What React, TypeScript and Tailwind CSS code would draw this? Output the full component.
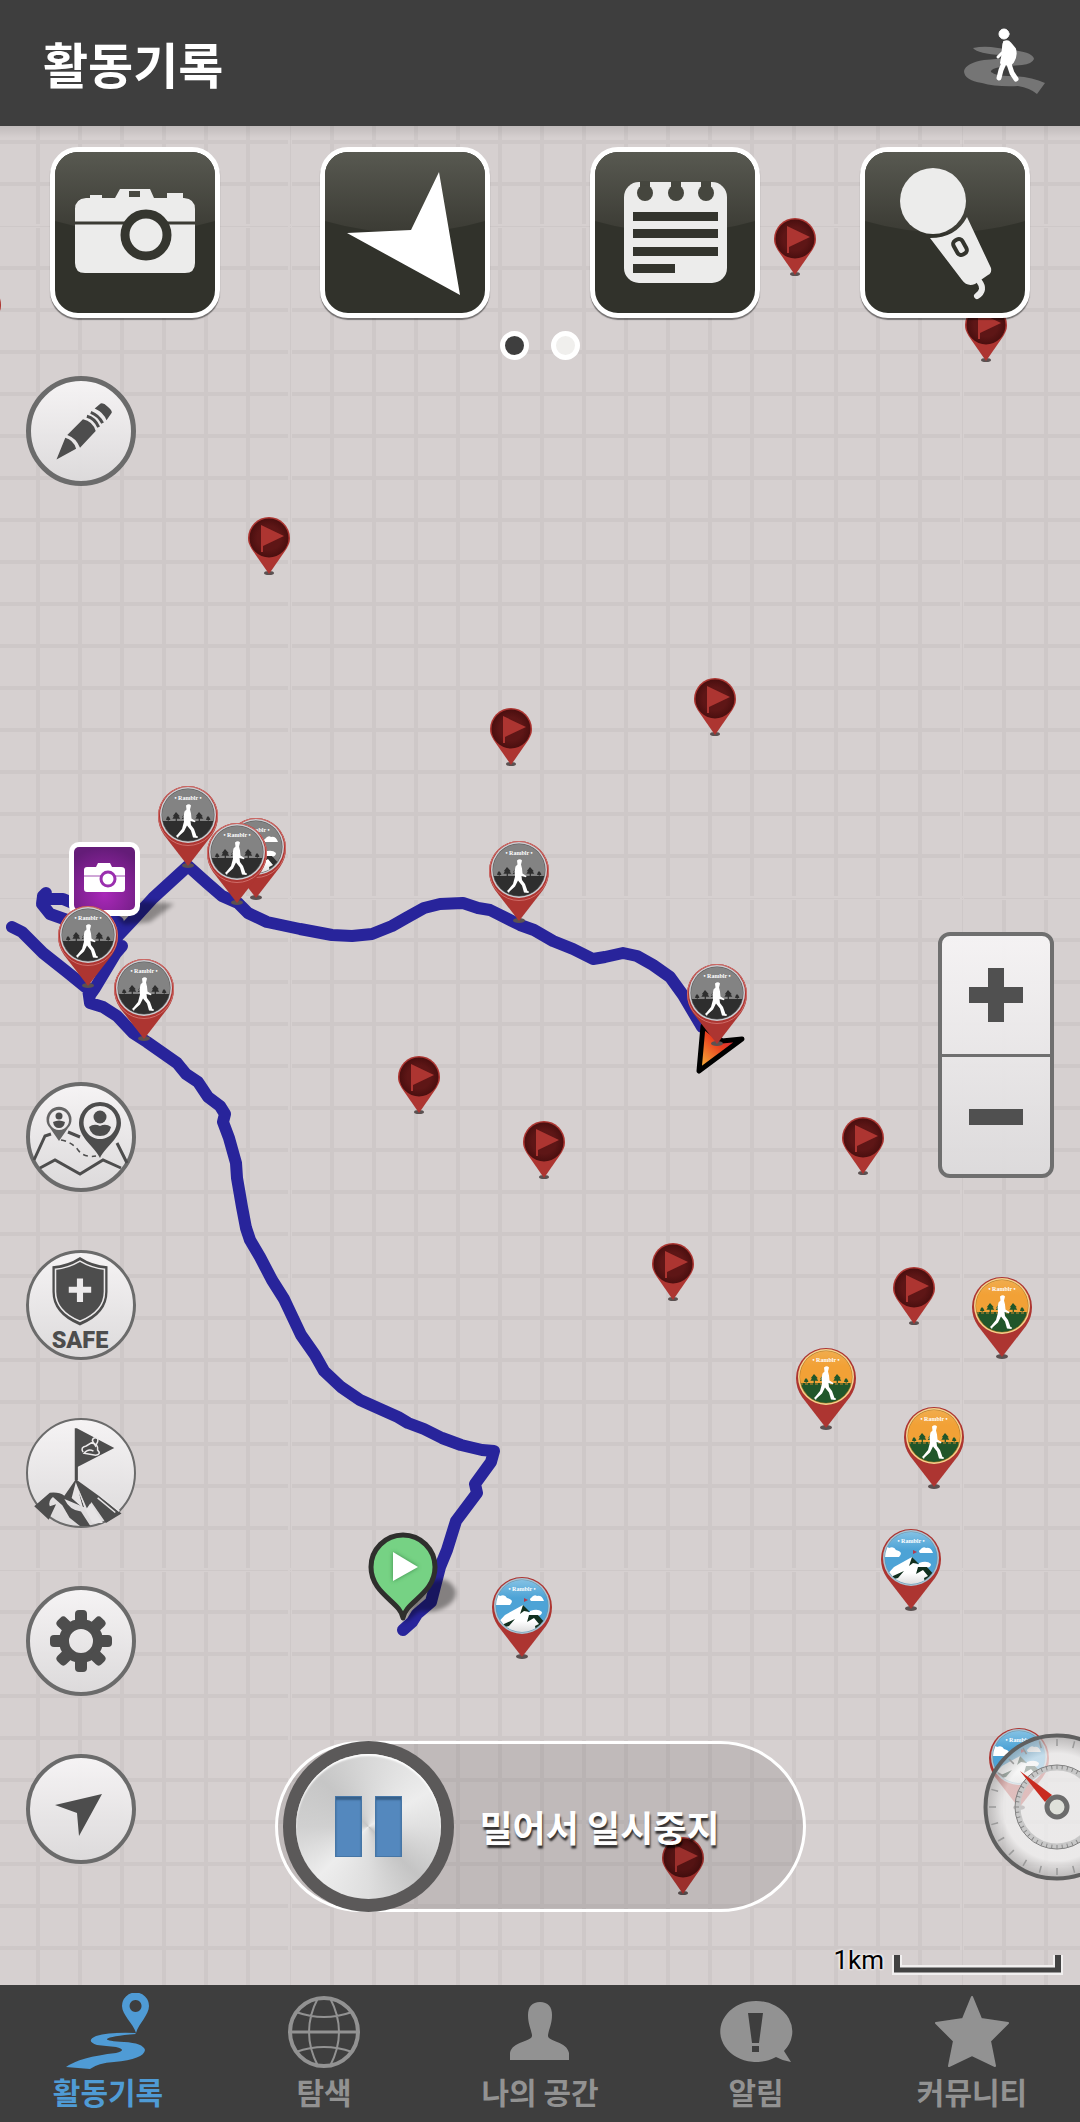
import React from 'react';
import clsx from 'clsx';

type BadgeKind = 'walk' | 'walkGray' | 'peak' | 'peakGray';

// Pin positions are the middle of the head and the top edge, in map pixels
const flagPins = [
  { x: -20, y: 158 },
  { x: 795, y: 92 },
  { x: 986, y: 178 },
  { x: 269, y: 391 },
  { x: 511, y: 582 },
  { x: 715, y: 552 },
  { x: 419, y: 930 },
  { x: 544, y: 995 },
  { x: 863, y: 991 },
  { x: 673, y: 1117 },
  { x: 914, y: 1141 },
  { x: 683, y: 1711 },
];

const badgePins: { x: number; y: number; kind: BadgeKind }[] = [
  { x: 188, y: 660, kind: 'walkGray' },
  { x: 256, y: 692, kind: 'peakGray' },
  { x: 237, y: 697, kind: 'walkGray' },
  { x: 88, y: 780, kind: 'walkGray' },
  { x: 144, y: 833, kind: 'walkGray' },
  { x: 519, y: 715, kind: 'walkGray' },
  { x: 717, y: 838, kind: 'walkGray' },
  { x: 1002, y: 1151, kind: 'walk' },
  { x: 826, y: 1222, kind: 'walk' },
  { x: 934, y: 1281, kind: 'walk' },
  { x: 911, y: 1403, kind: 'peak' },
  { x: 522, y: 1451, kind: 'peak' },
  { x: 1019, y: 1602, kind: 'peak' },
];

const SharedDefs = () => (
  <svg className="absolute size-0" aria-hidden="true">
    <defs>
      <radialGradient id="flagHead">
        <stop offset="0.6" stopColor="#5e1616" />
        <stop offset="1" stopColor="#4a0f0f" />
      </radialGradient>
      <linearGradient id="skyOrange" x1="0" y1="0" x2="0" y2="1">
        <stop offset="0" stopColor="#f0ae52" />
        <stop offset="0.3" stopColor="#f2a136" />
      </linearGradient>
      <linearGradient id="skyBlue" x1="0" y1="0" x2="0" y2="1">
        <stop offset="0" stopColor="#8cc6e6" />
        <stop offset="0.35" stopColor="#4da3d6" />
      </linearGradient>
      <linearGradient id="gloss" x1="0" y1="0" x2="0" y2="1">
        <stop offset="0" stopColor="#585951" />
        <stop offset="1" stopColor="#3b3b34" />
      </linearGradient>
      <linearGradient id="fire" x1="0.9" y1="0.1" x2="0.1" y2="1">
        <stop offset="0" stopColor="#c01a50" />
        <stop offset="0.45" stopColor="#e8401f" />
        <stop offset="1" stopColor="#f9b63a" />
      </linearGradient>
      <linearGradient id="snow" x1="0" y1="0" x2="0" y2="1">
        <stop offset="0.5" stopColor="#ffffff" />
        <stop offset="1" stopColor="#cfcfcf" />
      </linearGradient>
      <clipPath id="badgeClip">
        <circle cx="30" cy="29" r="26" />
      </clipPath>
    </defs>
  </svg>
);

const MapGrid = () => (
  <svg className="absolute inset-0 size-full">
    <defs>
      <pattern id="cell" x="290" y="100" width="42" height="42" patternUnits="userSpaceOnUse">
        <path d="M0 0h42M0 42h42M0 0v42M42 0v42" stroke="#cec8c8" strokeWidth="4" />
      </pattern>
      {/* every 16 cells a tile border covers half of the line */}
      <pattern id="tile" x="290" y="100" width="672" height="672" patternUnits="userSpaceOnUse">
        <path d="M0 1.5h672M1.5 0v672" stroke="#d6d0d0" strokeWidth="1" />
        <path d="M0 671h672M671 0v672" stroke="#d6d0d0" strokeWidth="2" />
      </pattern>
    </defs>
    <rect width="100%" height="100%" fill="#d6d0d0" />
    <rect width="100%" height="100%" fill="url(#cell)" />
    <rect width="100%" height="100%" fill="url(#tile)" />
  </svg>
);

const Route = () => (
  <svg className="absolute top-0 left-0 h-[1859px] w-[1080px]" viewBox="0 126 1080 1859">
    <g fill="none" stroke="#28249b" strokeWidth="12" strokeLinecap="round" strokeLinejoin="round">
      <path d="M12 927L22 932 43 953 67 972 88 989 90 1003 103 1007 117 1016 133 1033 147 1042 177 1063 186 1074 198 1082 208 1097 220 1106 225 1114 223 1122 229 1138 236 1163 237 1178 242 1207 246 1228 250 1240 260 1257 272 1280 284 1299 301 1335 315 1355 324 1371 341 1387 360 1400 398 1417 408 1423 424 1429 442 1438 461 1445 482 1450 494 1451 491 1462 475 1484 477 1493 456 1521 447 1550 440 1567 431 1602 417 1614 412 1622 403 1630" />
      <path d="M90 995L95 988 116 953 122 946 M110 950L118 936 133 920 153 898 188 866 207 883 222 896 238 903 248 913 267 922 300 929 332 935 352 936 372 934 392 926 406 918 424 908 440 904 463 903 478 908 490 910 520 925 534 930 553 941 573 949 593 959 605 957 623 953 637 956 653 965 670 977 683 995 702 1027" />
      <path d="M67 920L50 914 42 904 43 896 46 893 45 899 63 899 75 904 118 922" />
    </g>
    {/* current heading */}
    <path d="M699 1071L703 1026 722 1041 742 1039Z" fill="url(#fire)" stroke="#000" strokeWidth="5" strokeLinejoin="round" />
  </svg>
);

const FlagPin = () => (
  <svg className="h-[58px] w-[42px]" viewBox="0 0 42 58">
    <ellipse cx="21" cy="56" rx="5" ry="2" fill="#5b5151" />
    <path d="M21 57L5 34C1 28 0 25 0 21a21 21 0 0 1 42 0C42 25 41 28 37 34Z" fill="#ad3531" />
    <circle cx="21" cy="21" r="19.5" fill="url(#flagHead)" />
    <path d="M13 8L36 19 15 29V35H13Z" fill="#ad3531" />
  </svg>
);

const tree = (x: number, h: number) =>
  `M${x} ${31 - h}l${h / 2.6} ${h / 2.4}h-${h / 8}l${h / 6} ${h / 4}h-${h / 3}v${h / 3}h-${h / 8}v-${h / 3}h-${h / 3}l${h / 6}-${h / 4}h-${h / 8}Z`;

const BadgePin = ({ kind }: { kind: BadgeKind }) => {
  const gray = kind === 'walkGray' || kind === 'peakGray';
  const walk = kind === 'walk' || kind === 'walkGray';
  const dark = gray ? '#2e2e2e' : walk ? '#21562a' : '#12301f';
  return (
    <svg className="h-[82px] w-[60px]" viewBox="0 0 60 82">
      <ellipse cx="30" cy="79.5" rx="6" ry="2.5" fill="#5b5151" />
      <path d="M30 80L6 49C2 43 0 37 0 30a30 30 0 0 1 60 0C60 37 58 43 54 49Z" fill="#ad3531" />
      {gray && <circle cx="30" cy="30" r="29.5" fill="none" stroke="#cf6d69" strokeWidth="1" />}
      <circle cx="30" cy="29" r="28" fill={gray ? '#cdced2' : walk ? '#f6d28c' : '#a9c4d3'} />
      <circle cx="30" cy="29" r="26.5" fill={gray ? '#555' : walk ? '#a9762c' : '#6c93a8'} />
      <g clipPath="url(#badgeClip)">
        <rect width="60" height="60" fill={gray ? '#838383' : walk ? 'url(#skyOrange)' : 'url(#skyBlue)'} />
        {walk ? (
          <>
            <rect y="35" width="60" height="25" fill={dark} />
            <path transform="translate(0 5)" d={[tree(18, 10), tree(41, 10), tree(10, 6), tree(50, 6), tree(27, 9)].join('')} fill={dark} />
            {!gray && <path d="M4 36H56" stroke="#c98b2e" strokeWidth="1" strokeDasharray="3 2" />}
            <path
              d="M28 19.5q3-2.5 5 0l-1 4 1 4 .5 5 4 2.5-.5 1.2-4.5-1.2.5 4 3 4 2.5 7 1.5.5-.5 1.5-4.5-.5-2-7-4-5-3 6-5.5 5-.5 1.5-2-2 1.5-1.5 4.5-5.5 2-7.5-.5-5 1-5 2-2Z"
              fill="#fff"
            />
          </>
        ) : (
          <>
            <path d="M2 22q3-6 6-3 5-2 7 2 8 2 3 7H2ZM39 21q3-4 6-2 5-1 7 5H39q-2-2 0-3ZM38 34q8-3 12 1 0 4-6 4H36Z" fill="#fff" />
            <path d="M31 28L36 35 46 38 58 60H2V50L13 38Z" fill="url(#snow)" />
            <path d="M31 28L38 35 32 34 28 37Z M37 38L46 38 54 47 44 54 43 49 47 47 42 41 35 45Z M23 42L12 47 9 51 17 49Z" fill={dark} />
            <path d="M32 28V21l4 2-4 2Z" fill={gray ? '#444' : '#b33a4c'} />
          </>
        )}
        <text x="30" y="14" textAnchor="middle" fontSize="6" fontWeight="700" fill="#fff" fontFamily="'Liberation Serif', serif">
          • Ramblr •
        </text>
      </g>
    </svg>
  );
};

const PhotoPin = () => (
  <svg className="absolute top-[713px] left-[66px] h-[90px] w-[114px]" viewBox="66 839 114 90">
    <defs>
      <radialGradient id="photoBg" cy="0.75" r="0.75">
        <stop offset="0" stopColor="#a928b8" />
        <stop offset="1" stopColor="#641c78" />
      </radialGradient>
      <filter id="soft" x="-20%" y="-40%" width="140%" height="180%">
        <feGaussianBlur stdDeviation="2" />
      </filter>
    </defs>
    <path d="M116 917L142 901 174 904 150 922 124 925Z" fill="#000" opacity="0.35" filter="url(#soft)" />
    <rect x="69" y="842" width="71" height="74" rx="10" fill="#fff" />
    <rect x="74" y="847" width="61" height="63" rx="5" fill="url(#photoBg)" />
    <path d="M84 870q0-3 3-3h9l2-4h12l2 4h9q4 0 4 3v19q0 3-3 3H87q-3 0-3-3Z" fill="#fff" />
    <path d="M84 876h41" stroke="#a04fb0" strokeWidth="1" />
    <circle cx="108" cy="879" r="7" fill="#fff" stroke="#9a2fae" strokeWidth="3" />
  </svg>
);

const StartPin = () => (
  <svg className="absolute top-[1404px] left-[366px] h-[106px] w-[96px]" viewBox="366 1530 96 106">
    <path d="M403 1624L414 1598Q428 1576 446 1580 462 1590 452 1602 440 1614 420 1611Z" fill="#000" opacity="0.38" filter="url(#soft)" />
    <path
      d="M403 1618C401 1602 371 1594 371 1567a32 32 0 0 1 64 0C435 1594 405 1602 403 1618Z"
      fill="#76d284"
      stroke="#2f2f2d"
      strokeWidth="5"
      strokeLinejoin="round"
    />
    <path d="M393 1552L418 1567 393 1581Z" fill="#3a8a49" filter="url(#soft)" />
    <path d="M393 1552L418 1567 393 1581Z" fill="#fff" />
  </svg>
);

const ToolButton = ({ label, children }: { label: string; children: React.ReactNode }) => (
  <button aria-label={label} className="h-[171px] w-[170px] overflow-hidden rounded-[28px] border-[5px] border-white bg-[#31322b] shadow-[0_2px_1px_rgba(0,0,0,0.45)]">
    <svg className="size-full" viewBox="0 0 160 161">
      <path d="M0 0H160V69Q80 92 0 69Z" fill="url(#gloss)" />
      {children}
    </svg>
  </button>
);

const RoundButton = ({ label, border = 'border-4', children }: { label: string; border?: string; children: React.ReactNode }) => (
  <button aria-label={label} className={clsx('size-[110px] shrink-0 rounded-full border-[#6b6b6b] bg-linear-to-b from-[#f7f5f6]/95 to-[#dddbdc]/95 text-[#4d4d4d]', border)}>
    <svg className="size-full" viewBox="4 4 102 102" fill="currentColor">
      {children}
    </svg>
  </button>
);

const Compass = () => {
  const ticks = Array.from({ length: 24 }, (_, i) => i * 15);
  const smallTicks = Array.from({ length: 48 }, (_, i) => i * 7.5);
  return (
    <svg className="-mr-[51px] size-[148px] shrink-0" viewBox="-74 -74 148 148" role="img" aria-label="나침반">
      <defs>
        <radialGradient id="dial">
          <stop offset="0.75" stopColor="#f3f3f3" stopOpacity="0.72" />
          <stop offset="1" stopColor="#a8a8a8" stopOpacity="0.6" />
        </radialGradient>
      </defs>
      <circle r="71.5" fill="url(#dial)" stroke="#5f5f5f" strokeWidth="4" />
      <circle r="39" fill="none" stroke="#c8c8c8" strokeWidth="5" />
      <circle r="42" fill="none" stroke="#7d7d7d" strokeWidth="1" />
      {ticks.map((a) => (
        <path key={a} d="M0 61V68" stroke="#999" strokeWidth="1.5" transform={`rotate(${a})`} />
      ))}
      {smallTicks.map((a) => (
        <path key={a} d="M0 38V42" stroke="#888" strokeWidth="1" transform={`rotate(${a})`} />
      ))}
      <path d="M-37 -36L-5 -12 -12 -5Z" fill="#c92a1f" />
      <circle r="10" fill="#dfe1da" stroke="#6c6c6c" strokeWidth="5" />
    </svg>
  );
};

const navItems = [
  {
    label: '활동기록',
    active: true,
    icon: (
      <path
        fillRule="evenodd"
        d="M70 40C67 30 56 22 56 13a13.5 13.5 0 0 1 27 0C83 22 73 30 70 40ZM69.5 7a6 6 0 1 0 .1 0Z M69 40Q44 39 30 43 19 48 31 52 40 53 50 54 62 57 50 60 14 64 0 74L24 76Q32 70 48 69 78 66 79 57 77 50 58 49 40 48 41 46 44 43 70 41Z"
      />
    ),
  },
  {
    label: '탐색',
    icon: (
      <g fill="none" stroke="currentColor" strokeWidth="2">
        <circle cx="42" cy="39" r="34" strokeWidth="4" />
        <path d="M7 39H77" strokeWidth="3" />
        <path d="M36 5Q18 39 36 73M48 5Q66 39 48 73M14 19Q42 29 70 19M14 59Q42 49 70 59" />
      </g>
    ),
  },
  {
    label: '나의 공간',
    icon: <path d="M42 9C50 9 54 14 54 22 54 31 51 36 50 42 49 49 69 48 71 60V67H12V60C14 48 35 49 34 42 33 36 30 31 30 22 30 14 34 9 42 9Z" />,
  },
  {
    label: '알림',
    icon: (
      <path
        fillRule="evenodd"
        d="M42 8A36 30.5 0 0 1 70 58L77 69Q69 68 62 64A36 30.5 0 1 1 42 8ZM34 20L38 50H45L49 20ZM38 53V59H45V53Z"
      />
    ),
  },
  {
    label: '커뮤니티',
    icon: <path d="M42 4L51 26 78 30 60 48 65 73 42 62 19 73 24 48 6 30 33 26Z" stroke="currentColor" strokeWidth="2" strokeLinejoin="round" />,
  },
];

export default function App() {
  return (
    <div className="flex min-h-screen flex-col overflow-hidden bg-[#3e3e3e] font-['Noto_Sans_CJK_KR',sans-serif]">
      <SharedDefs />

      <header className="flex h-[126px] shrink-0 items-center justify-between pr-[34px] pb-[2px] pl-[43px]">
        <h1 className="text-[49px] leading-none font-bold text-white">활동기록</h1>
        <button aria-label="걷기">
          <svg className="h-[68px] w-[82px]" viewBox="0 0 82 68">
            <path
              d="M9 20Q18 18 27 19L48 22Q69 24 70 31 68 36 58 37L36 39Q26 41 27 44 32 48 44 48 66 48 81 55L73 66Q66 60 54 58 32 59 18 55 0 52 0 43 2 35 20 32 34 31 40 30L38 27Q14 26 9 20Z"
              fill="#757575"
            />
            <g fill="#fff" stroke="#fff" strokeLinecap="round" strokeLinejoin="round">
              <circle cx="40" cy="6" r="5" />
              <path d="M40 14Q44 12 46 15L51 21Q53 28 49 34L46 37 37 35 39 24Z" strokeWidth="2" />
              <path d="M40 16L39 24 34 29" fill="none" strokeWidth="3" />
              <path d="M40 35L37 42 35 50M45 36L48 45 52 51" fill="none" strokeWidth="5" />
            </g>
          </svg>
        </button>
      </header>

      <main className="relative flex flex-1 flex-col overflow-hidden">
        {/* Map */}
        <div className="absolute inset-0">
          <MapGrid />
          <div className="absolute inset-x-0 top-0 h-3 bg-linear-to-b from-black/10 to-transparent" />
          <Route />
          <PhotoPin />
          <StartPin />
          {flagPins.map((p) => (
            <div key={`${p.x}-${p.y}`} className="absolute -translate-x-1/2" style={{ left: p.x, top: p.y }}>
              <FlagPin />
            </div>
          ))}
          {badgePins.map((p) => (
            <div key={`${p.x}-${p.y}`} className="absolute -translate-x-1/2" style={{ left: p.x, top: p.y }}>
              <BadgePin kind={p.kind} />
            </div>
          ))}
        </div>

        {/* Quick tools */}
        <div className="relative grid grid-cols-4 justify-items-center pt-[21px]">
          <ToolButton label="사진">
            <path
              fill="#ececeb"
              fillRule="evenodd"
              d="M31 46H35V43H47V46H60L65 37H95L99 46H112V41H128V46H129Q140 47 140 57V111Q140 121 130 121H30Q20 121 20 111V57Q20 47 31 46ZM74 39V45H85V39Z"
            />
            <path d="M20 71H140" stroke="#3b3b34" strokeWidth="3" />
            <circle cx="91" cy="83" r="21" fill="#ececeb" stroke="#35362f" strokeWidth="9" />
          </ToolButton>
          <ToolButton label="위치">
            <path d="M114 20L135 143 22 81 86 78Z" fill="#fff" />
          </ToolButton>
          <ToolButton label="메모">
            <rect x="29" y="30" width="103" height="101" rx="15" fill="#ececeb" />
            <g fill="#45463e">
              <path d="M45 29H55V36H45ZM76 29H86V36H76ZM106 29H116V36H106Z" />
              <circle cx="50" cy="41" r="8" />
              <circle cx="81" cy="41" r="8" />
              <circle cx="111" cy="41" r="8" />
            </g>
            <path d="M38 60H123V69H38ZM38 77H123V86H38ZM38 95H123V104H38ZM38 112H80V121H38Z" fill="#33342d" />
          </ToolButton>
          <ToolButton label="음성">
            <circle cx="68" cy="49" r="33" fill="#ececeb" />
            <path d="M65 86Q91 86 102 65L126 116Q127 121 123 123L110 132Q102 135 97 128Z" fill="#ececeb" />
            <g transform="rotate(-29 95 95)">
              <rect x="90" y="87" width="10" height="16" rx="4" fill="#ececeb" stroke="#33342d" strokeWidth="4" />
            </g>
            <path d="M114 129Q121 138 112 144" fill="none" stroke="#ececeb" strokeWidth="6" strokeLinecap="round" />
          </ToolButton>
        </div>

        <div className="relative mt-[13px] flex justify-center gap-[22px]">
          <span className="size-[29px] rounded-full border-[5px] border-white bg-[#3e3e3e]" />
          <span className="size-[29px] rounded-full border-[5px] border-white bg-[#f0efed]" />
        </div>

        <div className="relative grid flex-1 grid-cols-[1fr_auto_1fr]">
          {/* Side tools */}
          <div className="flex flex-col gap-[58px] pt-4 pb-[121px] pl-[26px]">
            <RoundButton label="그리기" border="border-[5px]">
              <path d="M30 84L39 62Q47 64 50 73ZM41 59L57 43Q67 45 70 55L54 72Q50 62 41 59ZM69 32L75 27Q78 26 82 30 88 35 86 37L81 44Q78 36 69 32Z" />
              <path d="M61 40Q69 42 73 51M65 36Q73 39 77 47" fill="none" stroke="currentColor" strokeWidth="3" />
            </RoundButton>
            <div className="mt-auto" />
            <RoundButton label="주변 지도">
              <g fill="none" stroke="currentColor" strokeWidth="3">
                <path d="M8 78L19 54 25 52M42 50L54 55M91 61L101 81M14 86L29 78 54 92 77 78 95 86" />
                <path d="M35 58Q46 60 52 68T70 74" strokeWidth="1.5" strokeDasharray="5 4" />
              </g>
              <path fillRule="evenodd" d="M33 59L24 46A12.5 12.5 0 1 1 42 46ZM33 28a10 10 0 1 0 .1 0Z" opacity="0.85" />
              <circle cx="33" cy="34" r="3.5" />
              <path d="M27 40Q33 37 39 40 38 46 33 46 28 46 27 40Z" />
              <path fillRule="evenodd" d="M74 76C69 65 53 56 53 41a21 21 0 0 1 42 0C95 56 79 65 74 76ZM74 24a16.5 16.5 0 1 0 .1 0Z" />
              <circle cx="74" cy="35" r="6.5" />
              <path d="M63 45Q68 41 74 44 80 41 85 45 83 54 74 54 65 54 63 45Z" />
            </RoundButton>
            <RoundButton label="안전" border="border-[3px]">
              <path d="M54 8Q66 16 81 17V42Q81 64 54 75 27 64 27 42V17Q42 16 54 8Z" />
              <path d="M54 12Q66 19 78 20V42Q78 61 54 71 30 61 30 42V20Q42 19 54 12Z" fill="none" stroke="#eceaeb" strokeWidth="1.5" />
              <path d="M51 29H57V37H65V43H57V52H51V43H43V37H51Z" fill="#eceaeb" />
              <text x="54" y="97" textAnchor="middle" fontSize="23" fontWeight="900" fontFamily="Roboto, sans-serif">
                SAFE
              </text>
            </RoundButton>
            <RoundButton label="정상 도전" border="border-2">
              <path d="M49 12H51L87 31 52 49V62H49Z" />
              <path d="M57 35Q54 30 60 29L65 26Q72 27 71 33 75 37 69 38L58 36Q62 31 67 34M66 24q0-3 3-3t2 4l-2 4Z" fill="none" stroke="#eceaeb" strokeWidth="1.5" />
              <path d="M10 87L25 74Q34 73 39 77L50 61 72 77 94 94 79 103 65 83 62 92 52 69 58 88 39 80Q44 91 55 92L64 106 54 106 44 98 37 86 28 78Q23 82 25 87L31 85 24 100Z" />
              <path d="M50 64L46 79 57 89 53 74 60 92 66 103 76 103 64 84 60 90Z" fill="#e6e4e5" />
              <path d="M74 77L92 92M71 79L88 93" stroke="#e6e4e5" strokeWidth="1.5" />
            </RoundButton>
            <RoundButton label="설정">
              <circle cx="55" cy="55" r="17" fill="none" stroke="currentColor" strokeWidth="10" />
              {[0, 45, 90, 135, 180, 225, 270, 315].map((a) => (
                <rect key={a} x="49" y="24" width="12" height="15" rx="4" transform={`rotate(${a} 55 55)`} />
              ))}
            </RoundButton>
            <RoundButton label="현재 위치">
              <path d="M76 40L53 82 51 59 29 51Z" />
            </RoundButton>
          </div>

          {/* Slide to pause */}
          <button className="mb-[73px] flex h-[171px] w-[531px] items-center self-end rounded-full border-[3px] border-white bg-black/10">
            <span className="-my-[3px] ml-[5px] flex size-[171px] shrink-0 items-center justify-center rounded-full bg-[#5b5959]">
              <span className="flex size-[145px] items-center justify-center gap-[13px] rounded-full bg-[conic-gradient(#d8d8d8,#ededed_60deg,#e0e0e0_90deg,#c4c4c4_135deg,#dedede_180deg,#ededed_225deg,#d0d0d0_270deg,#c6c6c6_315deg,#d8d8d8)] shadow-[inset_0_2px_2px_#fff]">
                <span className="h-[61px] w-[27px] border border-[#4676a6] bg-[#5488be] shadow-[inset_0_3px_2px_#37608a]" />
                <span className="h-[61px] w-[27px] border border-[#4676a6] bg-[#5488be] shadow-[inset_0_3px_2px_#37608a]" />
              </span>
            </span>
            <span className="ml-[26px] pb-[2px] text-[36px] leading-none font-bold text-white [text-shadow:1px_3px_2px_rgba(0,0,0,0.75)]">밀어서 일시중지</span>
          </button>

          {/* Zoom, compass and scale */}
          <div className="flex flex-col items-end pr-[26px] pb-[10px]">
            <div className="mt-[572px] flex h-[246px] w-[116px] flex-col divide-y-[3px] divide-[#6f6f6f] rounded-xl border-4 border-[#6f6f6f] bg-linear-to-b from-[#f6f4f5]/95 to-[#dddbdc]/95 text-[#505050]">
              <button aria-label="확대" className="flex flex-1 items-center justify-center">
                <svg className="size-[54px]" viewBox="0 0 54 54" fill="currentColor">
                  <path d="M19 0H35V19H54V35H35V54H19V35H0V19H19Z" />
                </svg>
              </button>
              <button aria-label="축소" className="flex flex-1 items-center justify-center">
                <svg className="size-[54px]" viewBox="0 0 54 54" fill="currentColor">
                  <path d="M0 21H54V37H0Z" />
                </svg>
              </button>
            </div>
            <div className="mt-auto -mr-[26px] flex overflow-hidden">
              <Compass />
            </div>
            <div className="mt-[68px] -mr-[10px] flex items-end gap-[8px]">
              <span className="pb-1 font-[Roboto,sans-serif] text-[26px] leading-[22px] text-black [text-shadow:0_0_3px_#fff,0_0_3px_#fff]">1km</span>
              <svg className="h-[22px] w-[172px]" viewBox="0 0 172 22">
                <path d="M5 2V17H166V2" fill="none" stroke="#f1efef" strokeWidth="10" />
                <path d="M5 2V17M166 2V17" fill="none" stroke="#424242" strokeWidth="6" />
                <path d="M2 17H169" stroke="#424242" strokeWidth="5" />
              </svg>
            </div>
          </div>
        </div>
      </main>

      <nav className="grid h-[137px] shrink-0 grid-cols-5 bg-[#3e3e3e]">
        {navItems.map((item) => (
          <a key={item.label} href="#" className={clsx('flex flex-col items-center pt-2', item.active ? 'text-[#4f9bd5]' : 'text-[#929292]')}>
            <svg className="h-[76px] w-[84px]" viewBox="0 0 84 76" fill="currentColor">
              {item.icon}
            </svg>
            <span className="mt-[7px] text-[30px] leading-[30px] font-bold">{item.label}</span>
          </a>
        ))}
      </nav>
    </div>
  );
}
